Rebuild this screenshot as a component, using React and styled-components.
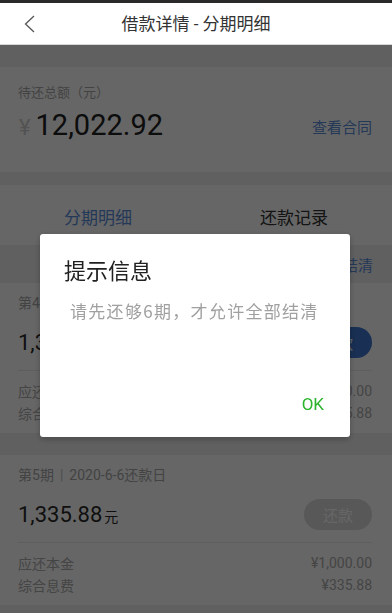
import React from "react";
import styled, { createGlobalStyle } from "styled-components";

const Global = createGlobalStyle`
  html, body { margin: 0; padding: 0; overflow: hidden; }
  body {
    background: #efefef;
    font-family: Roboto, "Noto Sans CJK SC", "Noto Sans", sans-serif;
    -webkit-font-smoothing: antialiased;
  }
  * { box-sizing: border-box; }
`;

const Page = styled.div`
  width: 392px;
  height: 613px;
  overflow: hidden;
  display: flex;
  flex-direction: column;
  background: #efefef;
  & > * { flex-shrink: 0; }
`;

const StatusStrip = styled.div`
  height: 3px;
  background: #2a2a2a;
`;

const Header = styled.header`
  height: 42px;
  background: #fff;
  border-bottom: 1px solid #d8d8d8;
  display: flex;
  align-items: center;
  justify-content: center;
  position: relative;
`;

const BackButton = styled.button`
  position: absolute;
  left: 18px;
  top: 9px;
  width: 24px;
  height: 24px;
  padding: 0;
  border: 0;
  background: none;
  display: flex;
  align-items: center;
  justify-content: center;
`;

const Title = styled.h1`
  margin: 0;
  font-size: 17px;
  font-weight: 400;
  color: #333;
  line-height: 24px;
`;

const Content = styled.main`
  display: flex;
  flex-direction: column;
  padding-top: 22px;
  & > * { flex-shrink: 0; }
`;

const SummaryCard = styled.section`
  background: #fff;
  padding: 16px 20px 29px 18px;
  margin-bottom: 13px;
`;

const SummaryLabel = styled.div`
  font-size: 13px;
  line-height: 20px;
  color: #a8a8a8;
`;

const SummaryRow = styled.div`
  margin-top: 4px;
  height: 36px;
  display: flex;
  align-items: center;
  justify-content: space-between;
`;

const BigAmount = styled.div`
  display: flex;
  align-items: baseline;
  color: #222;
  font-family: Roboto, sans-serif;
  font-size: 29px;
`;

const Yen = styled.span`
  font-size: 22px;
  color: #cfcfcf;
  margin-right: 5px;
  margin-left: 1px;
`;

const LinkText = styled.span`
  font-size: 15px;
  color: #5b8fdc;
  margin-top: 2px;
`;

const Tabs = styled.nav`
  height: 60px;
  background: #fff;
  display: flex;
`;

const Tab = styled.div`
  flex: 1;
  display: flex;
  align-items: center;
  justify-content: center;
  font-size: 17px;
  color: ${(p) => (p.$active ? "#5b8fdc" : "#333")};
  padding-top: 2px;
`;

const SettleRow = styled.div`
  height: 38px;
  display: flex;
  align-items: center;
  justify-content: flex-end;
  padding-right: 19px;
  font-size: 15px;
  color: #5b8fdc;
`;

const Card = styled.section`
  background: #fff;
  height: 150px;
  margin-bottom: 22px;
  display: flex;
  flex-direction: column;
  padding-top: 10px;
`;

const PeriodLine = styled.div`
  padding: 0 20px 0 18px;
  font-size: 14px;
  line-height: 20px;
  color: #a8a8a8;
`;

const Sep = styled.span`
  margin: 0 6px;
  color: #c4c4c4;
`;

const AmountRow = styled.div`
  margin-top: 11px;
  height: 36px;
  padding: 0 20px 0 18px;
  display: flex;
  align-items: center;
  justify-content: space-between;
`;

const Amount = styled.div`
  font-family: Roboto, sans-serif;
  font-size: 22px;
  color: #2a2a2a;
  display: flex;
  align-items: baseline;
`;

const Unit = styled.span`
  font-family: "Noto Sans CJK SC", sans-serif;
  font-size: 14px;
  margin-left: 2px;
`;

const PayButton = styled.button`
  width: 68px;
  height: 31px;
  border: 0;
  border-radius: 16px;
  background: ${(p) => (p.$disabled ? "#dcdcdc" : "#3f77cf")};
  color: #fff;
  font-family: "Noto Sans CJK SC", sans-serif;
  font-size: 15px;
  padding: 0;
`;

const Divider = styled.div`
  margin: 10px 20px 0 18px;
  height: 1px;
  background: #ececec;
`;

const Details = styled.div`
  padding: 9px 20px 0 18px;
  display: flex;
  flex-direction: column;
`;

const DetailRow = styled.div`
  height: 22px;
  display: flex;
  align-items: center;
  justify-content: space-between;
  font-size: 14px;
  color: #acacac;
`;

const Overlay = styled.div`
  position: fixed;
  top: 45px;
  left: 0;
  right: 0;
  bottom: 0;
  background: rgba(0, 0, 0, 0.6);
`;

const Dialog = styled.div`
  position: absolute;
  top: 189px;
  left: 40px;
  width: 310px;
  height: 203px;
  background: #fff;
  border-radius: 3px;
  box-shadow: 0 2px 6px rgba(0, 0, 0, 0.25);
  display: flex;
  flex-direction: column;
`;

const DialogTitle = styled.div`
  margin: 22px 0 0 24px;
  font-size: 22px;
  line-height: 26px;
  color: #212121;
  font-family: "Noto Sans CJK SC", sans-serif;
`;

const DialogMessage = styled.div`
  margin: 17px 0 0 30px;
  font-size: 17px;
  line-height: 24px;
  letter-spacing: 1.3px;
  color: #a0a0a0;
  font-family: "Noto Sans CJK SC", sans-serif;
`;

const DialogActions = styled.div`
  margin-top: auto;
  display: flex;
  justify-content: flex-end;
  padding: 0 26px 21px 0;
`;

const OkButton = styled.button`
  border: 0;
  background: none;
  padding: 0;
  font-family: Roboto, sans-serif;
  font-size: 17px;
  line-height: 24px;
  color: #2bb32b;
`;

const periods = [
  { no: 4, date: "2020-5-6", amount: "1,335.88", principal: "¥1,000.00", fee: "¥335.88", disabled: false },
  { no: 5, date: "2020-6-6", amount: "1,335.88", principal: "¥1,000.00", fee: "¥335.88", disabled: true },
];

export default function App() {
  return (
    <>
      <Global />
      <Page>
        <StatusStrip />
        <Header>
          <BackButton aria-label="返回">
            <svg width="14" height="18" viewBox="0 0 14 18">
              <polyline points="11,1 2.5,9 11,17" fill="none" stroke="#555" strokeWidth="1.3" />
            </svg>
          </BackButton>
          <Title>借款详情 - 分期明细</Title>
        </Header>
        <Content>
          <SummaryCard>
            <SummaryLabel>待还总额（元）</SummaryLabel>
            <SummaryRow>
              <BigAmount>
                <Yen>¥</Yen>12,022.92
              </BigAmount>
              <LinkText>查看合同</LinkText>
            </SummaryRow>
          </SummaryCard>
          <Tabs>
            <Tab $active>分期明细</Tab>
            <Tab>还款记录</Tab>
          </Tabs>
          <SettleRow>全部结清</SettleRow>
          {periods.map((p) => (
            <Card key={p.no}>
              <PeriodLine>
                第{p.no}期<Sep>|</Sep>{p.date}还款日
              </PeriodLine>
              <AmountRow>
                <Amount>
                  {p.amount}
                  <Unit>元</Unit>
                </Amount>
                <PayButton $disabled={p.disabled}>还款</PayButton>
              </AmountRow>
              <Divider />
              <Details>
                <DetailRow>
                  <span>应还本金</span>
                  <span>{p.principal}</span>
                </DetailRow>
                <DetailRow>
                  <span>综合息费</span>
                  <span>{p.fee}</span>
                </DetailRow>
              </Details>
            </Card>
          ))}
        </Content>
      </Page>
      <Overlay>
        <Dialog>
          <DialogTitle>提示信息</DialogTitle>
          <DialogMessage>请先还够6期，才允许全部结清</DialogMessage>
          <DialogActions>
            <OkButton>OK</OkButton>
          </DialogActions>
        </Dialog>
      </Overlay>
    </>
  );
}
